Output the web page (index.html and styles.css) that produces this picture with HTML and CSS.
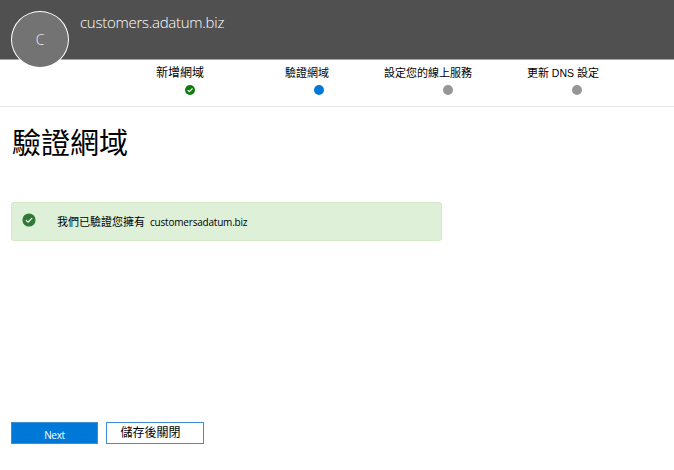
FILE: index.html
```html
<!DOCTYPE html>
<html lang="zh-Hant">
<head>
<meta charset="utf-8">
<title>驗證網域</title>
<link rel="stylesheet" href="styles.css">
</head>
<body>
<header class="header">
  <div class="avatar">C</div>
  <div class="domain"><span>customers.adatum.biz</span></div>
</header>
<nav class="steps">
  <div class="step step-add">
    <span class="label">新增網域</span>
    <svg class="dot" viewBox="0 0 10 10"><circle cx="5" cy="5" r="5" fill="#0a7d0a"/><path d="M2.6 5.1 4.3 6.7 7.5 3.5" fill="none" stroke="#fff" stroke-width="1.1"/></svg>
  </div>
  <div class="step step-verify">
    <span class="label">驗證網域</span>
    <svg class="dot" viewBox="0 0 10 10"><circle cx="5" cy="5" r="5" fill="#0078d7"/></svg>
  </div>
  <div class="step step-services">
    <span class="label">設定您的線上服務</span>
    <svg class="dot" viewBox="0 0 10 10"><circle cx="5" cy="5" r="5" fill="#969696"/></svg>
  </div>
  <div class="step step-dns">
    <span class="label">更新 <span class="latin">DNS</span> 設定</span>
    <svg class="dot" viewBox="0 0 10 10"><circle cx="5" cy="5" r="5" fill="#969696"/></svg>
  </div>
</nav>
<main class="content">
  <h1 class="title"><span>驗證網域</span></h1>
  <div class="notice">
    <svg class="notice-icon" viewBox="0 0 14 14"><circle cx="7" cy="7" r="6.6" fill="#317a35"/><path d="M3.9 7.1 6.1 9.2 10.1 5.1" fill="none" stroke="#fff" stroke-width="1.3"/></svg>
    <span class="notice-text">我們已驗證您擁有</span>
    <span class="notice-domain">customersadatum.biz</span>
  </div>
  <div class="actions">
    <button class="button primary"><span>Next</span></button>
    <button class="button secondary"><span>儲存後關閉</span></button>
  </div>
</main>
</body>
</html>
```
FILE: styles.css
```css
* { box-sizing: border-box; }
body {
  margin: 0;
  height: 470px;
  overflow: hidden;
  background: #fff;
  color: #000;
  font-family: "Open Sans", "Noto Sans CJK TC", sans-serif;
}
.header {
  display: flex;
  height: 60px;
  padding: 11px 0 0 11px;
  background: #505050;
  border-bottom: 1px solid #a6a6a6;
}
.avatar {
  flex: none;
  display: flex;
  align-items: center;
  justify-content: center;
  width: 58px;
  height: 57px;
  border: 1.5px solid #fff;
  border-radius: 50%;
  background: #737373;
  color: #f0f0f0;
  font-size: 14px;
  font-weight: 300;
}
.domain {
  margin-left: 11px;
  color: #fff;
  font-size: 15px;
  font-weight: 300;
  line-height: 22px;
  letter-spacing: -0.27px;
  white-space: nowrap;
}
.steps {
  display: grid;
  grid-template-columns: repeat(4, 129px);
  height: 47px;
  padding: 5px 0 0 125px;
  border-bottom: 1px solid #e6e6e6;
}
.step {
  display: flex;
  flex-direction: column;
  align-items: center;
}
.label {
  height: 16px;
  align-self: flex-start;
  font-size: 11px;
  line-height: 16px;
  white-space: nowrap;
}
.step-add .label { margin-left: 31px; font-size: 12px; }
.step-verify .label { margin-left: 31px; }
.step-services .label { margin-left: 1px; }
.step-dns .label { margin-left: 15px; }
.latin { font-family: "Liberation Sans", sans-serif; font-size: 10.5px; }
.dot {
  width: 10px;
  height: 10px;
  margin-top: 4px;
}
.content { padding: 0 11px; }
.title {
  height: 40px;
  margin: 16px 0 0 1px;
  font-size: 29px;
  font-weight: 400;
  line-height: 40px;
}
.notice {
  display: flex;
  align-items: center;
  width: 431px;
  height: 39px;
  margin-top: 39px;
  padding: 0 10px;
  border: 1px solid #d3e9c8;
  border-radius: 3px;
  background: #dff0d8;
  font-size: 11px;
  line-height: 16px;
  white-space: nowrap;
}
.notice-icon {
  width: 14px;
  height: 14px;
  margin: 0 21px 4px 0;
}
.notice-domain { margin-left: 5px; font-size: 10px; letter-spacing: -0.2px; }
.actions {
  display: flex;
  gap: 8px;
  margin-top: 181px;
}
.button {
  height: 22px;
  padding: 0;
  border: 1px solid #3f8fd0;
  border-radius: 0;
  font-family: inherit;
  line-height: 20px;
}
.primary {
  width: 87px;
  background: #0078d7;
  color: #fff;
  font-size: 10px;
  letter-spacing: -0.3px;
}
.primary span { display: block; padding-top: 4px; line-height: 16px; }
.secondary {
  width: 98px;
  padding-right: 9px;
  background: #fff;
  color: #000;
  font-size: 12px;
}
```
